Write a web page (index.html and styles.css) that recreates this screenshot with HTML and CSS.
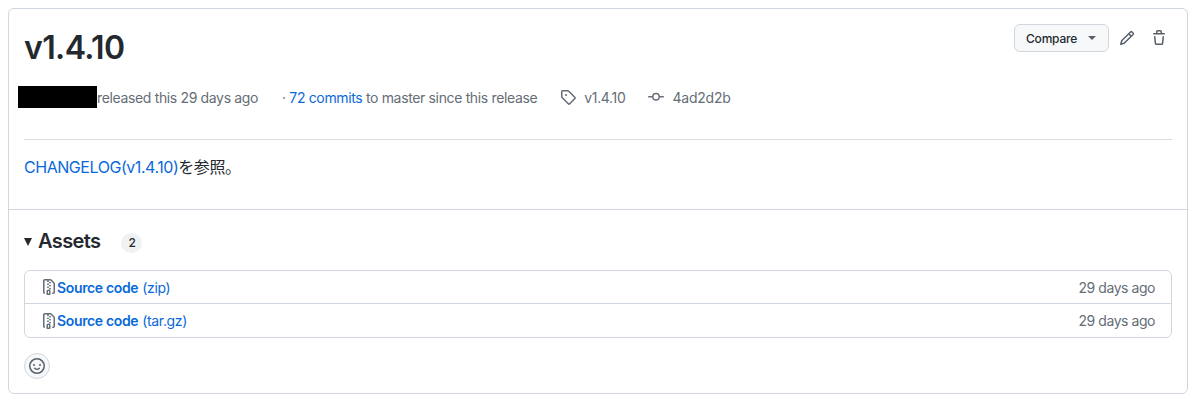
FILE: index.html
```html
<!DOCTYPE html>
<html lang="en">
<head>
<meta charset="utf-8">
<title>Release v1.4.10</title>
<link rel="stylesheet" href="styles.css">
</head>
<body>
<div class="release">
  <div class="release-head">
    <div class="title-row">
      <h1>v1.4.10</h1>
      <div class="actions">
        <button class="btn">Compare<span class="caret"></span></button>
        <svg class="icon" viewBox="0 0 16 16" width="16" height="16"><path d="M11.013 1.427a1.75 1.75 0 0 1 2.474 0l1.086 1.086a1.75 1.75 0 0 1 0 2.474l-8.61 8.61c-.21.21-.47.364-.756.445l-3.251.93a.75.75 0 0 1-.927-.928l.929-3.25c.081-.286.235-.547.445-.758l8.61-8.61Zm.176 4.823L9.75 4.81l-6.286 6.287a.253.253 0 0 0-.064.108l-.558 1.953 1.953-.558a.253.253 0 0 0 .108-.064Zm1.238-3.763a.25.25 0 0 0-.354 0L10.811 3.75l1.439 1.44 1.263-1.263a.25.25 0 0 0 0-.354Z"/></svg>
        <svg class="icon" viewBox="0 0 16 16" width="16" height="16"><path d="M11 1.75V3h2.25a.75.75 0 0 1 0 1.5H2.75a.75.75 0 0 1 0-1.5H5V1.75C5 .784 5.784 0 6.75 0h2.5C10.216 0 11 .784 11 1.75ZM4.496 6.675l.66 6.6a.25.25 0 0 0 .249.225h5.19a.25.25 0 0 0 .249-.225l.66-6.6a.75.75 0 0 1 1.492.149l-.66 6.6A1.748 1.748 0 0 1 10.595 15h-5.19a1.75 1.75 0 0 1-1.741-1.575l-.66-6.6a.75.75 0 1 1 1.492-.15ZM6.5 1.75V3h3V1.75a.25.25 0 0 0-.25-.25h-2.5a.25.25 0 0 0-.25.25Z"/></svg>
      </div>
    </div>
    <div class="meta">
      <span class="redacted"></span>
      <span class="released">released this 29 days ago</span>
      <span class="commits">· <a href="#">72 commits</a> to master since this release</span>
      <span class="ref">
        <svg viewBox="0 0 16 16" width="16" height="16"><path d="M1 7.775V2.75C1 1.784 1.784 1 2.75 1h5.025c.464 0 .91.184 1.238.513l6.25 6.25a1.75 1.75 0 0 1 0 2.474l-5.026 5.026a1.75 1.75 0 0 1-2.474 0l-6.25-6.25A1.752 1.752 0 0 1 1 7.775Zm1.5 0c0 .066.026.13.073.177l6.25 6.25a.25.25 0 0 0 .354 0l5.025-5.025a.25.25 0 0 0 0-.354l-6.25-6.25a.25.25 0 0 0-.177-.073H2.75a.25.25 0 0 0-.25.25ZM6 5a1 1 0 1 1 0 2 1 1 0 0 1 0-2Z"/></svg>
        v1.4.10
      </span>
      <span class="ref">
        <svg viewBox="0 0 16 16" width="16" height="16"><path d="M11.93 8.5a4.002 4.002 0 0 1-7.86 0H.75a.75.75 0 0 1 0-1.5h3.32a4.002 4.002 0 0 1 7.86 0h3.32a.75.75 0 0 1 0 1.5Zm-1.43-.75a2.5 2.5 0 1 0-5 0 2.5 2.5 0 0 0 5 0Z"/></svg>
        <span class="sha">4ad2d2b</span>
      </span>
    </div>
    <p class="notes"><a href="#">CHANGELOG(v1.4.10)</a>を参照。</p>
  </div>
  <div class="assets">
    <div class="assets-title">
      <span class="arrow"></span>
      <h2>Assets</h2>
      <span class="counter">2</span>
    </div>
    <ul class="asset-list">
      <li>
        <a href="#">
          <svg viewBox="0 0 16 16" width="16" height="16"><path d="M3.5 1.75v11.5c0 .09.048.173.126.217a.75.75 0 0 1-.752 1.298A1.748 1.748 0 0 1 2 13.25V1.75C2 .784 2.784 0 3.75 0h5.586c.464 0 .909.185 1.237.513l2.914 2.914c.329.328.513.773.513 1.237v8.586A1.75 1.75 0 0 1 12.25 15h-.5a.75.75 0 0 1 0-1.5h.5a.25.25 0 0 0 .25-.25V4.664a.25.25 0 0 0-.073-.177L9.513 1.573a.25.25 0 0 0-.177-.073H7.25a.75.75 0 0 1 0 1.5h-.5a.75.75 0 0 1 0-1.5h-3a.25.25 0 0 0-.25.25Zm3.75 8.75h.5c.966 0 1.75.784 1.75 1.75v3a.75.75 0 0 1-.75.75h-2.5a.75.75 0 0 1-.75-.75v-3c0-.966.784-1.75 1.75-1.75ZM6 5.25a.75.75 0 0 1 .75-.75h.5a.75.75 0 0 1 0 1.5h-.5A.75.75 0 0 1 6 5.25Zm.75 2.25h.5a.75.75 0 0 1 0 1.5h-.5a.75.75 0 0 1 0-1.5ZM8 6.75A.75.75 0 0 1 8.75 6h.5a.75.75 0 0 1 0 1.5h-.5A.75.75 0 0 1 8 6.75ZM8.75 3h.5a.75.75 0 0 1 0 1.5h-.5a.75.75 0 0 1 0-1.5ZM8 9.75A.75.75 0 0 1 8.75 9h.5a.75.75 0 0 1 0 1.5h-.5A.75.75 0 0 1 8 9.75Zm-1 2.5v2.25h1v-2.25a.25.25 0 0 0-.25-.25h-.5a.25.25 0 0 0-.25.25Z"/></svg>
          <b>Source code</b> <span>(zip)</span>
        </a>
        <span class="age">29 days ago</span>
      </li>
      <li>
        <a href="#">
          <svg viewBox="0 0 16 16" width="16" height="16"><path d="M3.5 1.75v11.5c0 .09.048.173.126.217a.75.75 0 0 1-.752 1.298A1.748 1.748 0 0 1 2 13.25V1.75C2 .784 2.784 0 3.75 0h5.586c.464 0 .909.185 1.237.513l2.914 2.914c.329.328.513.773.513 1.237v8.586A1.75 1.75 0 0 1 12.25 15h-.5a.75.75 0 0 1 0-1.5h.5a.25.25 0 0 0 .25-.25V4.664a.25.25 0 0 0-.073-.177L9.513 1.573a.25.25 0 0 0-.177-.073H7.25a.75.75 0 0 1 0 1.5h-.5a.75.75 0 0 1 0-1.5h-3a.25.25 0 0 0-.25.25Zm3.75 8.75h.5c.966 0 1.75.784 1.75 1.75v3a.75.75 0 0 1-.75.75h-2.5a.75.75 0 0 1-.75-.75v-3c0-.966.784-1.75 1.75-1.75ZM6 5.25a.75.75 0 0 1 .75-.75h.5a.75.75 0 0 1 0 1.5h-.5A.75.75 0 0 1 6 5.25Zm.75 2.25h.5a.75.75 0 0 1 0 1.5h-.5a.75.75 0 0 1 0-1.5ZM8 6.75A.75.75 0 0 1 8.75 6h.5a.75.75 0 0 1 0 1.5h-.5A.75.75 0 0 1 8 6.75ZM8.75 3h.5a.75.75 0 0 1 0 1.5h-.5a.75.75 0 0 1 0-1.5ZM8 9.75A.75.75 0 0 1 8.75 9h.5a.75.75 0 0 1 0 1.5h-.5A.75.75 0 0 1 8 9.75Zm-1 2.5v2.25h1v-2.25a.25.25 0 0 0-.25-.25h-.5a.25.25 0 0 0-.25.25Z"/></svg>
          <b>Source code</b> <span>(tar.gz)</span>
        </a>
        <span class="age">29 days ago</span>
      </li>
    </ul>
    <div class="smiley">
      <svg viewBox="0 0 16 16" width="16" height="16"><path d="M8 0a8 8 0 1 1 0 16A8 8 0 0 1 8 0ZM1.5 8a6.5 6.5 0 1 0 13 0 6.5 6.5 0 0 0-13 0Zm3.82 1.636a.75.75 0 0 1 1.038.175l.007.009c.103.118.22.222.35.31.264.178.683.37 1.285.37.602 0 1.02-.192 1.285-.371.13-.088.247-.192.35-.31l.007-.008a.75.75 0 0 1 1.222.87l-.022-.015c.02.013.021.015.021.015v.001l-.001.002-.002.003-.005.007-.014.019a2.066 2.066 0 0 1-.184.213c-.16.166-.338.316-.53.445-.63.418-1.37.638-2.127.629-.946 0-1.652-.308-2.126-.63a3.331 3.331 0 0 1-.715-.657l-.014-.02-.005-.006-.002-.003v-.002h-.001l.613-.432-.614.43a.75.75 0 0 1 .183-1.044ZM12 7a1 1 0 1 1-2 0 1 1 0 0 1 2 0ZM5 8a1 1 0 1 1 0-2 1 1 0 0 1 0 2Zm5.25 2.25.592.416a97.71 97.71 0 0 0-.592-.416Z"/></svg>
    </div>
  </div>
</div>
</body>
</html>
```

FILE: styles.css
```css
* { margin: 0; padding: 0; box-sizing: border-box; }
body { background: #fff; color: #24292f; font-family: Inter, "Noto Sans CJK JP", sans-serif; font-size: 14px; line-height: 21px; letter-spacing: -.35px; }
a { color: #0969da; text-decoration: none; }
ul { list-style: none; }
svg { fill: currentColor; flex: none; }

.release { margin: 8px 12px 8px 8px; height: 386px; border: 1px solid #d0d7de; border-radius: 6px; }

.release-head { padding: 15px 15px 0; height: 201px; border-bottom: 1px solid #d0d7de; }
.title-row { display: flex; justify-content: space-between; align-items: flex-start; height: 50px; }
h1 { font-size: 32px; line-height: 48px; font-weight: 600; letter-spacing: -.6px; }
.actions { display: flex; align-items: center; color: #57606a; margin-right: 5px; }
.btn { display: flex; align-items: center; width: 95px; height: 28px; padding-left: 11px; font: 500 12px Inter, sans-serif; letter-spacing: -.2px; color: #24292f; background: #f6f8fa; border: 1px solid #d0d7de; border-radius: 6px; }
.caret { margin-left: 11px; border: 4px solid transparent; border-top-color: #57606a; border-bottom: 0; }
.icon { margin-left: 10px; }
.icon + .icon { margin-left: 16px; }

.meta { display: flex; align-items: center; height: 22px; margin-top: 12px; color: #656d76; }
.redacted { width: 79px; height: 22px; margin-left: -6px; background: #000; }
.commits { margin-left: 24px; }
.ref { display: flex; align-items: center; gap: 8px; margin-left: 23px; }
.sha { letter-spacing: -.2px; }

.notes { margin-top: 31px; padding-top: 15px; border-top: 1px solid #d9dee3; font-size: 16px; line-height: 24px; letter-spacing: -.45px; }

.assets { padding: 0 15px; }
.assets-title { display: flex; align-items: center; height: 60px; padding-top: 2px; }
.arrow { border: 4px solid transparent; border-top: 8px solid #24292f; border-bottom: 0; margin-top: 2px; margin-right: 6px; }
h2 { font-size: 20px; font-weight: 600; line-height: 24px; letter-spacing: -.6px; }
.counter { margin-left: 21px; margin-top: 4px; width: 21px; height: 20px; border-radius: 10px; background: #eff1f3; font-size: 12px; line-height: 20px; text-align: center; font-weight: 500; }

.asset-list { border: 1px solid #d0d7de; border-radius: 6px; }
.asset-list li { display: flex; justify-content: space-between; align-items: center; height: 34px; padding: 0 16px; }
.asset-list li:first-child { height: 32px; }
.asset-list li + li { border-top: 1px solid #d0d7de; }
.asset-list a { display: flex; align-items: center; gap: 4px; }
.asset-list a svg { color: #656d76; margin-right: -4px; }
.asset-list b { font-weight: 600; }
.age { color: #656d76; letter-spacing: -.45px; }

.smiley { display: flex; align-items: center; justify-content: center; width: 26px; height: 26px; margin-top: 15px; color: #57606a; background: #f6f8fa; border: 1px solid #d0d7de; border-radius: 50%; }
```
